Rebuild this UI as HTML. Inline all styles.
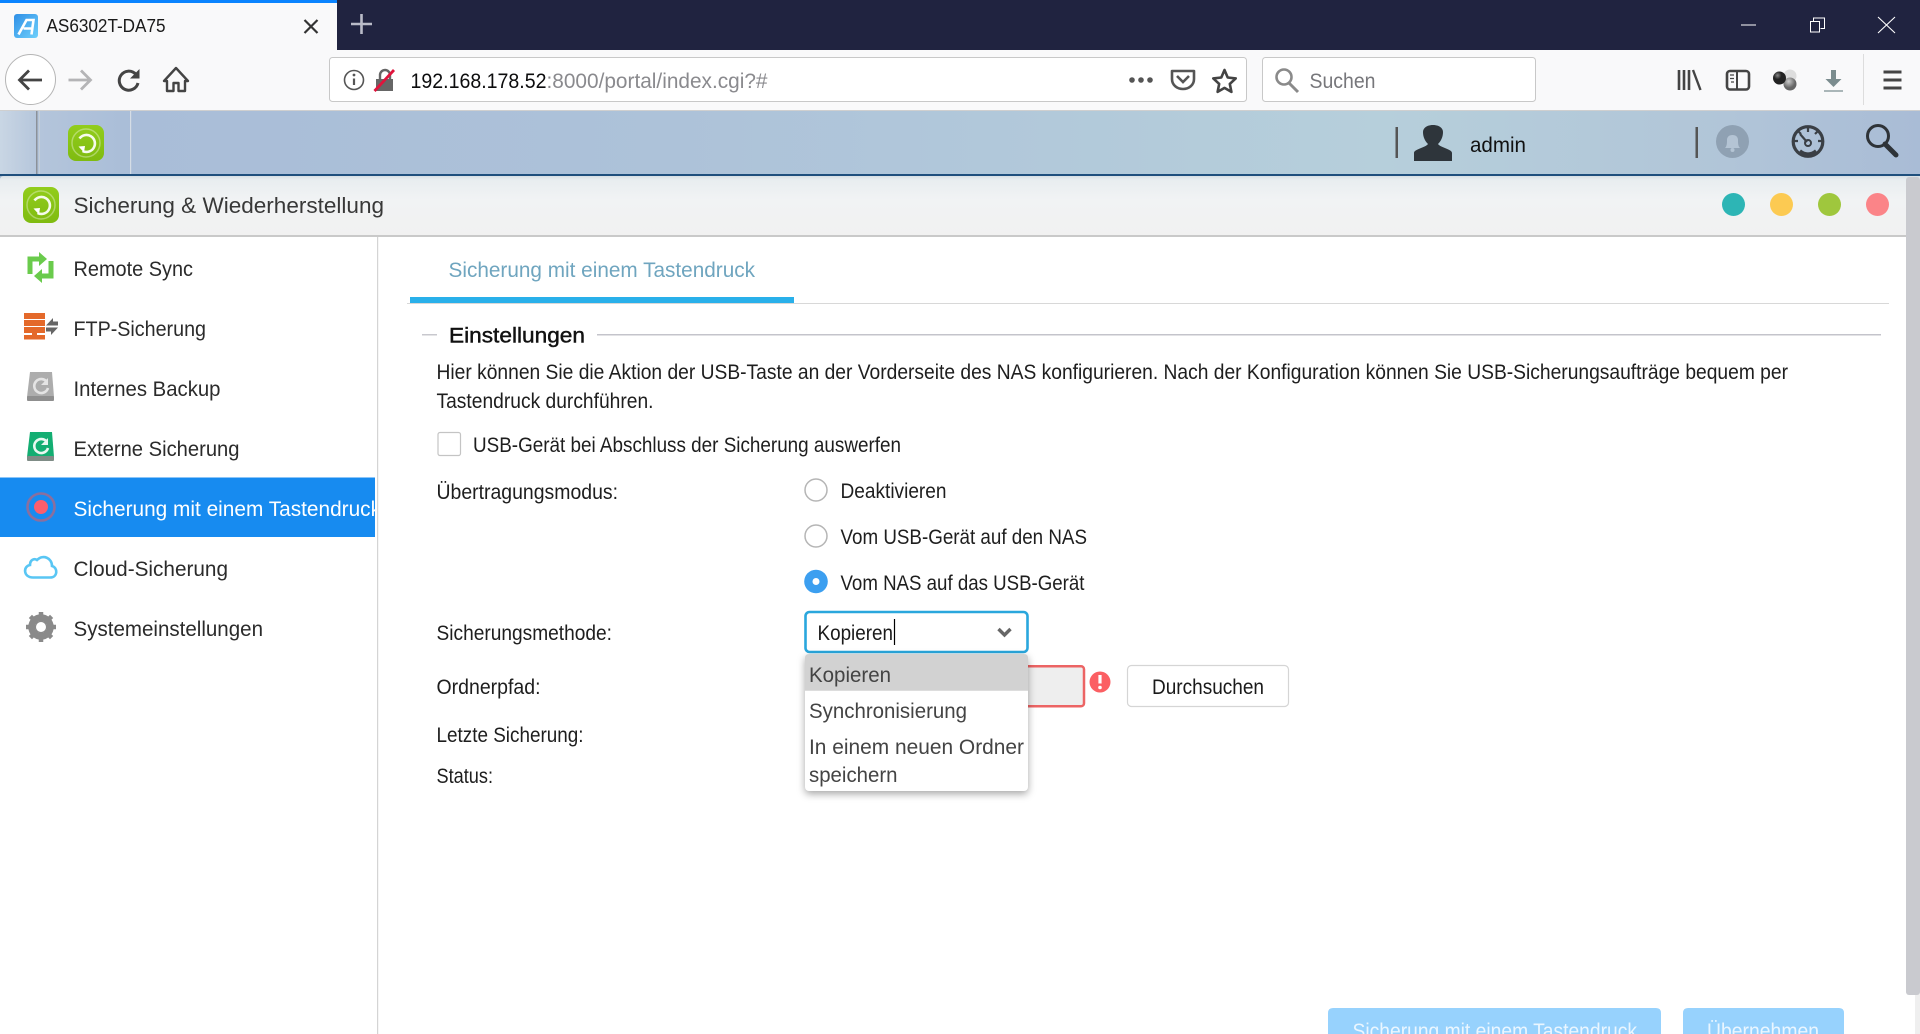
<!DOCTYPE html>
<html lang="de"><head><meta charset="utf-8"><title>AS6302T-DA75</title>
<style>
html,body{margin:0;padding:0;width:1920px;height:1034px;overflow:hidden;background:#fff}
svg{display:block}
text{font-family:"Liberation Sans",sans-serif;font-size:21px;fill:#2b2b2b}
</style></head><body>
<svg xmlns="http://www.w3.org/2000/svg" width="1920" height="1034" viewBox="0 0 1920 1034">
<defs>
<linearGradient id="bar" x1="0" x2="1" y1="0" y2="0"><stop offset="0" stop-color="#c9d6e4"/><stop offset=".02" stop-color="#b4c5db"/><stop offset=".07" stop-color="#a9bdd8"/><stop offset=".35" stop-color="#adc2d9"/><stop offset=".72" stop-color="#b6cfdb"/><stop offset=".9" stop-color="#b1c5d8"/><stop offset="1" stop-color="#a9bcd6"/></linearGradient>
<linearGradient id="win" x1="0" x2="0" y1="0" y2="1"><stop offset="0" stop-color="#d8dfe4"/><stop offset=".06" stop-color="#e8edf0"/><stop offset=".4" stop-color="#f1f3f4"/><stop offset="1" stop-color="#f1f1f1"/></linearGradient>
<linearGradient id="fav" x1="0" x2="1" y1="0" y2="1"><stop offset="0" stop-color="#2f8fe6"/><stop offset="1" stop-color="#6fd0fb"/></linearGradient>
<linearGradient id="grn" x1="0" x2="0" y1="0" y2="1"><stop offset="0" stop-color="#92cd1c"/><stop offset="1" stop-color="#7fbb10"/></linearGradient>
<symbol id="logo" viewBox="0 0 36 36"><rect width="36" height="36" rx="8" fill="url(#grn)"/><circle cx="18" cy="18" r="14" fill="none" stroke="#fff" stroke-opacity=".35" stroke-width="1.500"/><path d="M11.500 13.500A8.500 8.500 0 1 1 14.500 26" fill="none" stroke="#fff" stroke-opacity=".92" stroke-width="2.600"/><path d="M10.500 21.500l6.500-.5-1 6.500z" fill="#fff"/></symbol>
<radialGradient id="b1" cx=".35" cy=".3"><stop offset="0" stop-color="#888"/><stop offset=".6" stop-color="#222"/></radialGradient>
<radialGradient id="b2" cx=".4" cy=".3"><stop offset="0" stop-color="#ccc"/><stop offset="1" stop-color="#666"/></radialGradient>
</defs>

<!-- browser chrome -->
<rect width="1920" height="50" fill="#202340"/>
<rect width="337" height="50" fill="#f9f9fa"/>
<rect width="337" height="3" fill="#0a84ff"/>
<rect x="14" y="14" width="24" height="24" rx="3" fill="url(#fav)"/>
<path d="M18.500 34.500l8-14.500h7l-2 14.500M23.500 28.500h9" fill="none" stroke="#fff" stroke-width="2.600"/>
<text x="46.500" y="32" textLength="119" lengthAdjust="spacingAndGlyphs" style="font-size:18px;fill:#1a1a1a">AS6302T-DA75</text>
<path d="M304.500 20l13 13M317.500 20l-13 13" stroke="#333" stroke-width="2.200" fill="none"/>
<path d="M361.500 14v20M351 24h21" stroke="#b9bbc8" stroke-width="2.600" fill="none"/>
<path d="M1741 25h15" stroke="#fff" stroke-width="1"/>
<path d="M1810.500 21.500h9v10.500h-9zM1813.500 21v-3h11v10.500h-4" stroke="#fff" stroke-width="1" fill="none"/>
<path d="M1878 17l17 16M1895 17l-17 16" stroke="#fff" stroke-width="1.100" fill="none"/>

<rect y="50" width="1920" height="61" fill="#f9f9fa"/>
<rect y="110" width="1920" height="1" fill="#cfcfcf"/>
<circle cx="30.500" cy="79.500" r="25" fill="#fff" stroke="#b5b5b5" stroke-width="1"/>
<path d="M42 80H20M29 70.500L19.500 80l9.500 9.500" fill="none" stroke="#444" stroke-width="2.800"/>
<path d="M68.500 80h21M81 70.500L90.500 80 81 89.500" fill="none" stroke="#b4b4b6" stroke-width="2.800"/>
<path d="M136 74.500A9.500 9.500 0 1 0 138 83" fill="none" stroke="#444" stroke-width="3"/><path d="M139.500 69v9.500H130z" fill="#444"/>
<path d="M164 81l12-13 12 13h-3v10h-6.500v-8h-5v8H167V81z" fill="none" stroke="#444" stroke-width="2.400" stroke-linejoin="round"/>
<rect x="329.500" y="57.500" width="917" height="44" rx="3" fill="#fff" stroke="#c8c8c8"/>
<circle cx="354" cy="80" r="9.500" fill="none" stroke="#555" stroke-width="1.600"/>
<path d="M354 78.500v6.500" stroke="#555" stroke-width="2.200"/><circle cx="354" cy="75" r="1.400" fill="#555"/>
<rect x="376" y="79" width="17" height="12" fill="#666"/><path d="M380 79v-4a5 5 0 0 1 10 0v4" fill="none" stroke="#666" stroke-width="2.400"/><path d="M374.500 91L394 70" stroke="#e0143c" stroke-width="2.800"/>
<text x="410.500" y="88" textLength="136" lengthAdjust="spacingAndGlyphs" style="fill:#0c0c0d">192.168.178.52</text>
<text x="546.500" y="88" textLength="221" lengthAdjust="spacingAndGlyphs" style="fill:#8a8a8e">:8000/portal/index.cgi?#</text>
<circle cx="1132" cy="80" r="2.800" fill="#555"/><circle cx="1141" cy="80" r="2.800" fill="#555"/><circle cx="1150" cy="80" r="2.800" fill="#555"/>
<path d="M1172 71h22v8c0 6-5 10-11 10s-11-4-11-10z" fill="none" stroke="#555" stroke-width="2.600" stroke-linejoin="round"/><path d="M1177 76l6 6 6-6" fill="none" stroke="#555" stroke-width="2.600"/>
<path d="M1224.500 70l3.200 7.500 8 .9-5.900 5.500 1.600 8-6.900-4-6.900 4 1.600-8-5.900-5.500 8-.9z" fill="none" stroke="#444" stroke-width="2.600" stroke-linejoin="round"/>
<rect x="1262.500" y="57.500" width="273" height="44" rx="3" fill="#fff" stroke="#c8c8c8"/>
<circle cx="1284" cy="77" r="7.500" fill="none" stroke="#8a8a8a" stroke-width="2.600"/><path d="M1289 83l9 9" stroke="#8a8a8a" stroke-width="3"/>
<text x="1309.500" y="88" textLength="66" lengthAdjust="spacingAndGlyphs" style="fill:#77777b">Suchen</text>
<path d="M1679 70v20M1684 70v20M1689 70v20" stroke="#444" stroke-width="2.600"/><path d="M1693 70l7.500 20" stroke="#444" stroke-width="2.400"/>
<rect x="1727" y="71" width="22" height="18.500" rx="3" fill="none" stroke="#444" stroke-width="2.600"/><path d="M1737 71v18" stroke="#444" stroke-width="2"/><path d="M1730 75h4M1730 78.500h4M1731 82h3" stroke="#444" stroke-width="1.200"/>
<circle cx="1790" cy="76" r="6.500" fill="#ddd"/><circle cx="1790" cy="84" r="6.500" fill="url(#b2)"/><circle cx="1779.500" cy="78" r="6.500" fill="url(#b1)"/>
<path d="M1831 70h5v9h5.500l-8 8-8-8h5.500z" fill="#7b8c8e"/><path d="M1824 91h19" stroke="#8fa0a2" stroke-width="1.600"/>
<path d="M1863.500 54v51" stroke="#ddd" stroke-width="1"/>
<path d="M1883.500 72h18M1883.500 80h18M1883.500 88h18" stroke="#444" stroke-width="3"/>

<!-- NAS top bar -->
<rect y="111" width="1920" height="63" fill="url(#bar)"/>
<rect x="36" y="111" width="1.500" height="63" fill="#8b9199"/><rect x="39" y="111" width="1" height="63" fill="#c4ced9"/>
<rect x="130" y="111" width="1.200" height="63" fill="#d5dde6"/>
<use href="#logo" x="68" y="125" width="36" height="36"/>
<rect x="1395.500" y="127" width="2.500" height="31" fill="#555"/>
<path d="M1414 161v-8c0-4 11-5 14-9-3-3-5-7-5-12 0-4 4-7 10-7s10 3 10 7c0 5-2 9-5 12 3 4 14 5 14 9v8z" fill="#2e353b"/>
<text x="1470" y="152" textLength="56" lengthAdjust="spacingAndGlyphs" style="fill:#111">admin</text>
<rect x="1695.500" y="127" width="2.500" height="31" fill="#555"/>
<circle cx="1732.500" cy="141.500" r="16.500" fill="#8fa1b3"/>
<path d="M1725 148c2-2 2-5 2-8 0-3 2-5 5.500-5s5.500 2 5.500 5c0 3 0 6 2 8z" fill="#b4c4d4"/><circle cx="1732.500" cy="150" r="2" fill="#b4c4d4"/>
<circle cx="1808" cy="141.500" r="14.800" fill="none" stroke="#3a3f45" stroke-width="3.200"/>
<path d="M1798 153.500a15 15 0 0 0 20 0l-3-4a10 10 0 0 1-14 0z" fill="#3a3f45"/>
<path d="M1808 127v5M1794 141h4M1818 141h4M1798 131l3 3M1818 131l-3 3M1800 134l7 8" stroke="#3a3f45" stroke-width="2.200" fill="none"/>
<circle cx="1808" cy="143" r="3" fill="none" stroke="#3a3f45" stroke-width="2"/>
<circle cx="1878" cy="136" r="10.500" fill="none" stroke="#2e3338" stroke-width="3"/><path d="M1885 144l11 11" stroke="#2e3338" stroke-width="5" stroke-linecap="round"/>
<rect y="174" width="1920" height="2" fill="#1f4f7d"/>

<!-- window title -->
<path d="M0 236V180q0-4 4-4H1920v60z" fill="url(#win)"/>
<path d="M0 176h4q-4 0-4 4z" fill="#9fb5cc"/>
<rect y="235" width="1920" height="2" fill="#c9c9c9"/>
<use href="#logo" x="23" y="187" width="36" height="36"/>
<text x="73.500" y="213" textLength="310.500" lengthAdjust="spacingAndGlyphs" style="font-size:22px;fill:#383838">Sicherung &amp; Wiederherstellung</text>
<circle cx="1733.500" cy="204.500" r="11.500" fill="#2db5b5"/>
<circle cx="1781.500" cy="204.500" r="11.500" fill="#fcca52"/>
<circle cx="1829.500" cy="204.500" r="11.500" fill="#9fc73d"/>
<circle cx="1877.500" cy="204.500" r="11.500" fill="#fb8488"/>
<rect x="1915" y="237" width="5" height="797" fill="#efefef"/>
<rect x="1906" y="177" width="14" height="818" rx="3" fill="#c9cacf"/>

<!-- sidebar -->
<rect x="377" y="237" width="1.200" height="797" fill="#d4d4d4"/>
<path d="M40 259H30v15M41 276h10V261" fill="none" stroke="#6acb4c" stroke-width="5"/>
<path d="M39 252l8 7-8 7zM42 269l-8 7 8 7z" fill="#6acb4c"/>
<text x="73.500" y="276" textLength="119.500" lengthAdjust="spacingAndGlyphs">Remote Sync</text>
<rect x="24" y="313" width="21" height="6" fill="#e4692a"/><rect x="24" y="320" width="21" height="6" fill="#e4692a"/><rect x="24" y="327" width="21" height="6" fill="#e4692a"/>
<path d="M32 333h5v2h8v4.500H24V335h8z" fill="#e4692a"/>
<path d="M53 318v3.500h5v4H46zM51 335v-3.500h-5v-4h12z" fill="#666"/>
<text x="73.500" y="336" textLength="132.500" lengthAdjust="spacingAndGlyphs">FTP-Sicherung</text>
<path d="M30 372h22l2 25H27z" fill="#adadad"/><rect x="27" y="396" width="27" height="5" rx="1" fill="#8f8f8f"/>
<path d="M47 382a7 7 0 1 0 1 6" fill="none" stroke="#e4e4e4" stroke-width="2.600"/><path d="M48 378v7h-7z" fill="#e4e4e4"/>
<text x="73.500" y="396" textLength="147" lengthAdjust="spacingAndGlyphs">Internes Backup</text>
<path d="M30 432h22l2 25H27z" fill="#13ae72"/><rect x="27" y="456" width="27" height="5" rx="1" fill="#7f8c86"/>
<path d="M47 442a7 7 0 1 0 1 6" fill="none" stroke="#e8f8f0" stroke-width="2.600"/><path d="M48 438v7h-7z" fill="#e8f8f0"/>
<text x="73.500" y="456" textLength="166" lengthAdjust="spacingAndGlyphs">Externe Sicherung</text>
<rect y="477.500" width="375" height="59.500" fill="#178bf0"/>
<circle cx="41" cy="507" r="13.500" fill="none" stroke="#8a6f9e" stroke-width="2.600"/><circle cx="41" cy="507" r="7" fill="#fb5e6d"/>
<svg x="0" y="477" width="375" height="60"><text x="73.500" y="39" textLength="307.500" lengthAdjust="spacingAndGlyphs" style="fill:#fff">Sicherung mit einem Tastendruck</text></svg>
<path d="M33 577.500h17c8 0 8-10 2-11.500 0-8-9-12-15-6-3-2-7 0-7 5-7 1-7 12.500 3 12.500z" fill="none" stroke="#59c6f4" stroke-width="2.600"/>
<text x="73.500" y="576" textLength="154.500" lengthAdjust="spacingAndGlyphs">Cloud-Sicherung</text>
<circle cx="41" cy="627" r="9.500" fill="none" stroke="#8a8a8a" stroke-width="6.500"/>
<path d="M41 612v30M26 627h30M30.400 616.400l21.200 21.200M51.600 616.400L30.400 637.600" stroke="#8a8a8a" stroke-width="4.500"/>
<circle cx="41" cy="627" r="5" fill="#fff"/>
<text x="73.500" y="636" textLength="189.500" lengthAdjust="spacingAndGlyphs">Systemeinstellungen</text>

<!-- main -->
<text x="448.500" y="277" textLength="306.500" lengthAdjust="spacingAndGlyphs" style="fill:#6fa5bf">Sicherung mit einem Tastendruck</text>
<rect x="407" y="303" width="1482" height="1" fill="#d8d8d8"/>
<rect x="410" y="297" width="384" height="6" fill="#29b0ea"/>
<rect x="422" y="334" width="15" height="1.500" fill="#c8c8ce"/>
<rect x="597" y="334" width="1284" height="1.500" fill="#c4c4cb"/>
<text x="449" y="342.500" textLength="136" lengthAdjust="spacingAndGlyphs" style="fill:#111;stroke:#111;stroke-width:.45px">Einstellungen</text>
<text x="436.500" y="379" textLength="1351.500" lengthAdjust="spacingAndGlyphs" style="fill:#1e1e1e">Hier können Sie die Aktion der USB-Taste an der Vorderseite des NAS konfigurieren. Nach der Konfiguration können Sie USB-Sicherungsaufträge bequem per</text>
<text x="436.500" y="408" textLength="217" lengthAdjust="spacingAndGlyphs" style="fill:#1e1e1e">Tastendruck durchführen.</text>
<rect x="438" y="432.500" width="22.500" height="23" rx="2" fill="#fff" stroke="#c4c4c4" stroke-width="1.200"/>
<text x="473" y="452" textLength="428" lengthAdjust="spacingAndGlyphs" style="fill:#1e1e1e">USB-Gerät bei Abschluss der Sicherung auswerfen</text>
<text x="436.500" y="499" textLength="181.500" lengthAdjust="spacingAndGlyphs" style="fill:#1e1e1e">Übertragungsmodus:</text>
<circle cx="816" cy="490" r="11" fill="#fff" stroke="#b5b5b5" stroke-width="1.500"/>
<text x="840.500" y="498" textLength="106" lengthAdjust="spacingAndGlyphs" style="fill:#1e1e1e">Deaktivieren</text>
<circle cx="816" cy="536" r="11" fill="#fff" stroke="#b5b5b5" stroke-width="1.500"/>
<text x="840.500" y="544" textLength="246.500" lengthAdjust="spacingAndGlyphs" style="fill:#1e1e1e">Vom USB-Gerät auf den NAS</text>
<circle cx="816" cy="581.500" r="11.800" fill="#3c9ff0"/><circle cx="816" cy="581.500" r="3.500" fill="#fff"/>
<text x="840.500" y="590" textLength="244" lengthAdjust="spacingAndGlyphs" style="fill:#1e1e1e">Vom NAS auf das USB-Gerät</text>
<text x="436.500" y="640" textLength="175.500" lengthAdjust="spacingAndGlyphs" style="fill:#1e1e1e">Sicherungsmethode:</text>
<rect x="805.500" y="612" width="222" height="40" rx="4" fill="#fff" stroke="#2aa7dd" stroke-width="2.600"/>
<text x="817.500" y="640" textLength="75.500" lengthAdjust="spacingAndGlyphs" style="fill:#1a1a1a">Kopieren</text>
<path d="M894.500 619v26" stroke="#000" stroke-width="1.200"/>
<path d="M998.500 629l6 6 6-6" fill="none" stroke="#666" stroke-width="3.400"/>
<text x="436.500" y="694" textLength="104" lengthAdjust="spacingAndGlyphs" style="fill:#1e1e1e">Ordnerpfad:</text>
<rect x="960" y="666.200" width="124" height="40" rx="3" fill="#eee" stroke="#ec6464" stroke-width="2.500"/>
<circle cx="1100" cy="682" r="10.500" fill="#fb5f63"/>
<path d="M1100 675v8.500" stroke="#fff" stroke-width="3.200"/><circle cx="1100" cy="687.500" r="1.800" fill="#fff"/>
<rect x="1127.500" y="665.500" width="161" height="41" rx="4" fill="#fff" stroke="#d5d5d5" stroke-width="1.200"/>
<text x="1152" y="694" textLength="112" lengthAdjust="spacingAndGlyphs" style="fill:#1a1a1a">Durchsuchen</text>
<text x="436.500" y="742" textLength="147" lengthAdjust="spacingAndGlyphs" style="fill:#1e1e1e">Letzte Sicherung:</text>
<text x="436.500" y="783" textLength="56.500" lengthAdjust="spacingAndGlyphs" style="fill:#1e1e1e">Status:</text>

<!-- dropdown -->
<g style="filter:drop-shadow(0 3px 4px rgba(0,0,0,.35))"><rect x="805" y="654" width="223" height="137" rx="4" fill="#fff"/></g>
<path d="M805 690.700V658q0-4 4-4h215q4 0 4 4v32.700z" fill="#d2d2d2"/>
<text x="809" y="682" textLength="82" lengthAdjust="spacingAndGlyphs" style="fill:#444">Kopieren</text>
<text x="809" y="718" textLength="158" lengthAdjust="spacingAndGlyphs" style="fill:#444">Synchronisierung</text>
<text x="809" y="754" textLength="215" lengthAdjust="spacingAndGlyphs" style="fill:#444">In einem neuen Ordner</text>
<text x="809" y="782" textLength="88.500" lengthAdjust="spacingAndGlyphs" style="fill:#444">speichern</text>

<!-- buttons -->
<path d="M1328 1034v-21q0-5 5-5h323q5 0 5 5v21z" fill="#97d2fd"/>
<text x="1352.500" y="1038" textLength="284.500" lengthAdjust="spacingAndGlyphs" style="fill:#eaf6ff">Sicherung mit einem Tastendruck</text>
<path d="M1683 1034v-21q0-5 5-5h151q5 0 5 5v21z" fill="#97d2fd"/>
<text x="1707" y="1038" textLength="112" lengthAdjust="spacingAndGlyphs" style="fill:#eaf6ff">Übernehmen</text>
</svg>
</body></html>
